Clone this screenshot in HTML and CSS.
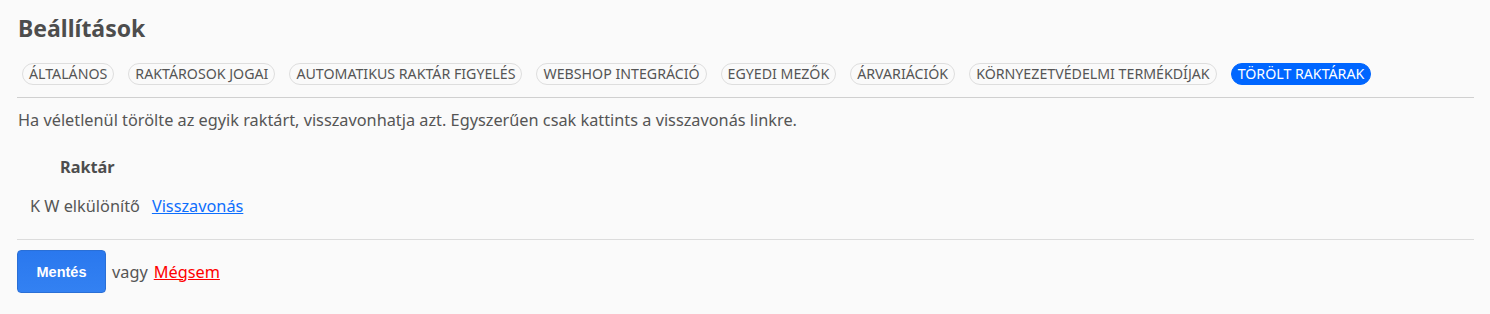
FILE: index.html
```html
<!DOCTYPE html>
<html lang="hu">
<head>
<meta charset="utf-8">
<link rel="stylesheet" href="styles.css">
</head>
<body>
<div class="page">
  <h1 class="title">Beállítások</h1>
  <nav class="tabs">
    <a class="tab">ÁLTALÁNOS</a>
    <a class="tab">RAKTÁROSOK JOGAI</a>
    <a class="tab">AUTOMATIKUS RAKTÁR FIGYELÉS</a>
    <a class="tab">WEBSHOP INTEGRÁCIÓ</a>
    <a class="tab">EGYEDI MEZŐK</a>
    <a class="tab">ÁRVARIÁCIÓK</a>
    <a class="tab">KÖRNYEZETVÉDELMI TERMÉKDÍJAK</a>
    <a class="tab active">TÖRÖLT RAKTÁRAK</a>
  </nav>
  <p class="intro">Ha véletlenül törölte az egyik raktárt, visszavonhatja azt. Egyszerűen csak kattints a visszavonás linkre.</p>
  <table class="list">
    <thead><tr><th>Raktár</th><th></th></tr></thead>
    <tbody><tr><td>K W elkülönítő</td><td><a class="link" href="#">Visszavonás</a></td></tr></tbody>
  </table>
  <div class="actions">
    <button class="btn">Mentés</button>
    <span class="or">vagy</span>
    <a class="cancel" href="#">Mégsem</a>
  </div>
</div>
</body>
</html>
```
FILE: styles.css
```css
html, body { margin: 0; padding: 0; background: #fafafa; }
body { font-family: "Noto Sans", "Open Sans", sans-serif; color: #555; }
.page { padding: 0 16px 0 17px; }
.title { margin: 0; padding-top: 12px; font-size: 23px; font-weight: 700; line-height: 32px; color: #4d4d4d; padding-left: 1px; }
.tabs { display: flex; gap: 14px; margin-top: 19px; padding: 0 0 12px 5px; border-bottom: 1px solid #d0d0d0; }
.tab { display: inline-block; height: 20px; line-height: 20px; padding: 0 6px; border: 1px solid #dedede; border-radius: 11px; font-size: 14.2px; color: #555; }
.tab.active { background: #0066ff; border-color: #0066ff; color: #fff; }
.intro { margin: 10px 0 0 1px; font-size: 16.3px; line-height: 24px; }
.list { border-collapse: collapse; margin-top: 21px; margin-left: 1px; font-size: 16.3px; }
.list th { text-align: left; padding: 2px 12px 2px 42px; font-weight: 700; color: #4d4d4d; height: 24px; }
.list td { padding: 13px 0 0 12px; line-height: 24px; }
.list td + td { padding-left: 12px; }
.link { color: #0d6efd; }
.actions { display: flex; align-items: center; gap: 6px; margin-top: 21px; padding-top: 10px; border-top: 1px solid #dcdcdc; }
.btn { width: 89px; height: 43px; border: 1px solid #2a6fd6; border-radius: 4px; background: linear-gradient(#2a78ee, #3381f2); color: #fff; font-family: "Liberation Sans", Arial, sans-serif; font-weight: 700; font-size: 14.5px; }
.or { font-size: 16.3px; }
.cancel { color: #ff0000; font-size: 16.3px; }
```
